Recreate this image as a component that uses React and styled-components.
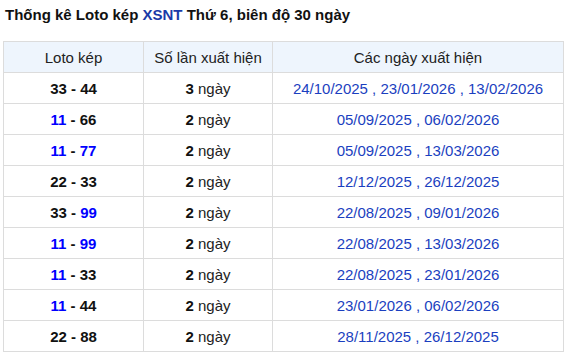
import React from 'react';
import styled, { createGlobalStyle } from 'styled-components';

const rows = [
  { a: '33', b: '44', count: 3, dates: ['24/10/2025', '23/01/2026', '13/02/2026'] },
  { a: '11', b: '66', count: 2, dates: ['05/09/2025', '06/02/2026'] },
  { a: '11', b: '77', count: 2, dates: ['05/09/2025', '13/03/2026'] },
  { a: '22', b: '33', count: 2, dates: ['12/12/2025', '26/12/2025'] },
  { a: '33', b: '99', count: 2, dates: ['22/08/2025', '09/01/2026'] },
  { a: '11', b: '99', count: 2, dates: ['22/08/2025', '13/03/2026'] },
  { a: '11', b: '33', count: 2, dates: ['22/08/2025', '23/01/2026'] },
  { a: '11', b: '44', count: 2, dates: ['23/01/2026', '06/02/2026'] },
  { a: '22', b: '88', count: 2, dates: ['28/11/2025', '26/12/2025'] },
];

const isBlue = (n) => n === '11' || n === '77' || n === '99';

function App() {
  return (
    <>
      <GlobalStyle />
      <Page>
        <Title>
          Thống kê Loto kép <Brand>XSNT</Brand> Thứ 6, biên độ 30 ngày
        </Title>
        <Table>
          <colgroup>
            <col style={{ width: 140 }} />
            <col style={{ width: 129 }} />
            <col />
          </colgroup>
          <thead>
            <tr>
              <Th>Loto kép</Th>
              <Th>Số lần xuất hiện</Th>
              <Th>Các ngày xuất hiện</Th>
            </tr>
          </thead>
          <tbody>
            {rows.map((r, i) => (
              <tr key={i}>
                <Td>
                  <Num $blue={isBlue(r.a)}>{r.a}</Num>
                  <Num> - </Num>
                  <Num $blue={isBlue(r.b)}>{r.b}</Num>
                </Td>
                <Td>
                  <Num>{r.count}</Num> ngày
                </Td>
                <Td>
                  <Dates>{r.dates.join(' , ')}</Dates>
                </Td>
              </tr>
            ))}
          </tbody>
        </Table>
      </Page>
    </>
  );
}

export default App;

const GlobalStyle = createGlobalStyle`
  body {
    margin: 0;
    background: #fff;
    font-family: "Liberation Sans", Arial, sans-serif;
    color: #111;
  }
`;

const Page = styled.div`
  width: 560px;
  padding: 5px 0 0 3px;
`;

const Title = styled.div`
  font-size: 15px;
  line-height: 20px;
  font-weight: bold;
  color: #111;
  padding-left: 2px;
  margin-bottom: 16px;
`;

const Brand = styled.span`
  color: #1a3aa8;
`;

const Table = styled.table`
  width: 561px;
  border-collapse: collapse;
  table-layout: fixed;
  font-size: 15px;
`;

const Th = styled.th`
  height: 30px;
  padding: 0;
  font-weight: normal;
  color: #222;
  background: #eef5fd;
  border: 1px solid #dcdcdc;
  text-align: center;
`;

const Td = styled.td`
  height: 30px;
  padding: 0;
  border: 1px solid #dcdcdc;
  text-align: center;
  color: #222;
`;

const Num = styled.span`
  font-weight: bold;
  color: ${(p) => (p.$blue ? '#0000ff' : '#111')};
`;

const Dates = styled.span`
  color: #1b3fc0;
`;
